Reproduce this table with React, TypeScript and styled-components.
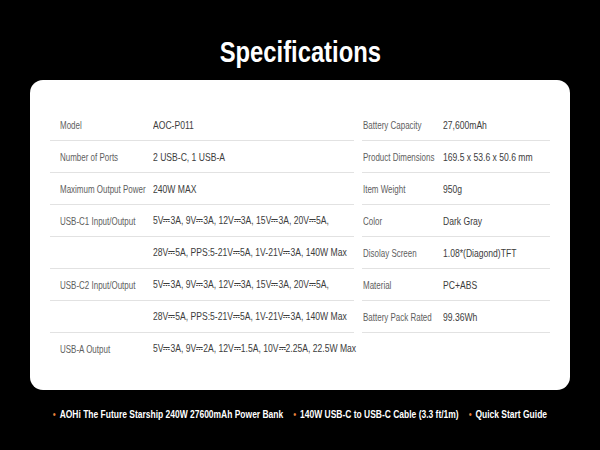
import React from "react";
import styled, { createGlobalStyle } from "styled-components";

const Global = createGlobalStyle`
  html, body { margin: 0; padding: 0; background: #000; }
  body { font-family: "Liberation Sans", Arial, sans-serif; }
`;

const Page = styled.div`
  width: 600px;
  height: 450px;
  background: #000;
  display: flex;
  flex-direction: column;
  align-items: center;
  padding-top: 36px;
  box-sizing: border-box;
  overflow: hidden;
`;

const Title = styled.h1`
  margin: 0;
  color: #fff;
  font-size: 29px;
  line-height: 32px;
  font-weight: 700;
  transform: scaleX(0.82);
  transform-origin: center;
`;

const Card = styled.div`
  margin-top: 12px;
  width: 540px;
  height: 310px;
  box-sizing: border-box;
  background: #fff;
  border-radius: 13px;
  padding: 29px 20px 0 20px;
  display: grid;
  grid-template-columns: 304px 188px;
  column-gap: 8px;
  align-items: start;
`;

const Table = styled.div<{ $labelWidth: number; $pad: number }>`
  display: grid;
  grid-template-columns: ${(p) => p.$labelWidth}px 1fr;
  --pad: ${(p) => p.$pad}px;
`;

const Row = styled.div<{ $last?: boolean }>`
  display: contents;
  & > span {
    height: 31px;
    display: flex;
    align-items: center;
    border-bottom: 1px solid ${(p) => (p.$last ? "transparent" : "#e2e2e2")};
    white-space: nowrap;
    overflow: visible;
    min-width: 0;
  }
`;

const Label = styled.span`
  padding-left: var(--pad);
  font-size: 10.5px;
  color: #5e5e5e;
`;

const Value = styled.span`
  font-size: 11px;
  color: #3c3c3c;
`;

const Squeeze = styled.span<{ $x: number }>`
  display: inline-block;
  transform: scaleX(${(p) => p.$x});
  transform-origin: left center;
`;

const Footer = styled.div`
  margin-top: 17px;
  display: flex;
  gap: 13px;
  color: #fff;
  font-size: 11px;
  font-weight: 700;
  line-height: 14px;
  white-space: nowrap;
  transform: scaleX(0.77);
  transform-origin: center;
`;

const Item = styled.span`
  display: flex;
  align-items: center;
  gap: 5px;
  &::before {
    content: "•";
    color: #e8843c;
    font-weight: 400;
  }
`;

const left: [string, string][] = [
  ["Model", "AOC-P011"],
  ["Number of Ports", "2 USB-C, 1 USB-A"],
  ["Maximum Output Power", "240W MAX"],
  ["USB-C1 Input/Output", "5V⎓3A, 9V⎓3A, 12V⎓3A, 15V⎓3A, 20V⎓5A,"],
  ["", "28V⎓5A, PPS:5-21V⎓5A, 1V-21V⎓3A, 140W Max"],
  ["USB-C2 Input/Output", "5V⎓3A, 9V⎓3A, 12V⎓3A, 15V⎓3A, 20V⎓5A,"],
  ["", "28V⎓5A, PPS:5-21V⎓5A, 1V-21V⎓3A, 140W Max"],
  ["USB-A Output", "5V⎓3A, 9V⎓2A, 12V⎓1.5A, 10V⎓2.25A, 22.5W Max"],
];

const right: [string, string][] = [
  ["Battery Capacity", "27,600mAh"],
  ["Product Dimensions", "169.5 x 53.6 x 50.6 mm"],
  ["Item Weight", "950g"],
  ["Color", "Dark Gray"],
  ["Disolay Screen", "1.08*(Diagond)TFT"],
  ["Material", "PC+ABS"],
  ["Battery Pack Rated", "99.36Wh"],
];

const LABEL_X = 0.76;
const VALUE_X = 0.78;

export default function App() {
  return (
    <>
      <Global />
      <Page>
        <Title>Specifications</Title>
        <Card>
          <Table $labelWidth={103} $pad={10}>
            {left.map(([l, v], i) => (
              <Row key={i} $last={i === left.length - 1}>
                <Label>
                  <Squeeze $x={LABEL_X}>{l}</Squeeze>
                </Label>
                <Value>
                  <Squeeze $x={VALUE_X}>{v}</Squeeze>
                </Value>
              </Row>
            ))}
          </Table>
          <Table $labelWidth={81} $pad={1}>
            {right.map(([l, v], i) => (
              <Row key={i}>
                <Label>
                  <Squeeze $x={LABEL_X}>{l}</Squeeze>
                </Label>
                <Value>
                  <Squeeze $x={VALUE_X}>{v}</Squeeze>
                </Value>
              </Row>
            ))}
          </Table>
        </Card>
        <Footer>
          <Item>AOHi The Future Starship 240W 27600mAh Power Bank</Item>
          <Item>140W USB-C to USB-C Cable (3.3 ft/1m)</Item>
          <Item>Quick Start Guide</Item>
        </Footer>
      </Page>
    </>
  );
}
